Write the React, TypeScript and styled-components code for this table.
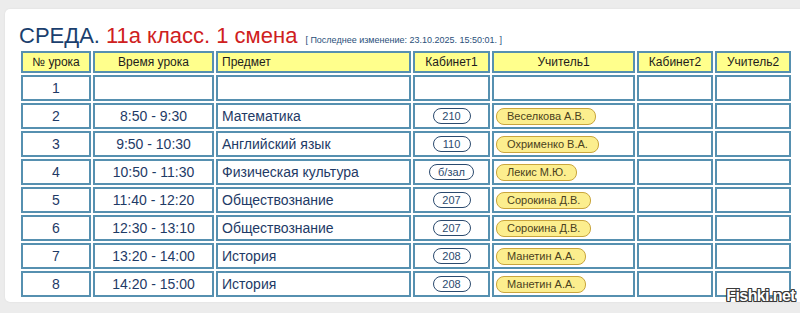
import React from "react";
import styled, { createGlobalStyle } from "styled-components";

const Global = createGlobalStyle`
  html, body { margin: 0; padding: 0; }
  body {
    background: #ececec;
    font-family: "Liberation Sans", Arial, sans-serif;
    overflow: hidden;
    width: 800px;
    height: 313px;
  }
`;

const Page = styled.div`
  position: relative;
  width: 800px;
  height: 313px;
  overflow: hidden;
`;

const Card = styled.div`
  margin: 9px 0 0 5px;
  width: 830px;
  height: 293px;
  box-sizing: border-box;
  background: #ffffff;
  border-radius: 5px;
  box-shadow: 0 0 2px rgba(0, 0, 0, 0.08);
  padding: 14px 0 0 14px;
`;

const Title = styled.div`
  display: flex;
  align-items: baseline;
  height: 26px;
  line-height: 26px;
`;

const Day = styled.span`
  font-size: 22px;
  color: #1b3f6e;
`;

const ClassName = styled.span`
  font-size: 22px;
  color: #cf2020;
  margin-left: 6px;
`;

const Updated = styled.span`
  font-size: 9px;
  color: #2a4f7a;
  margin-left: 8px;
`;

const Grid = styled.div`
  display: grid;
  grid-template-columns: 70px 121px 195px 77px 143px 76px 76px;
  grid-auto-rows: 26px;
  grid-template-rows: 22px;
  gap: 2px;
  padding: 2px;
`;

const Cell = styled.div<{ $head?: boolean; $align?: "left" | "center" }>`
  box-sizing: border-box;
  border: 2px solid #5690b0;
  background: ${(p) => (p.$head ? "#ffff8c" : "#ffffff")};
  color: ${(p) => (p.$head ? "#1c1c1c" : "#1e3a66")};
  font-size: ${(p) => (p.$head ? "12px" : "14px")};
  display: flex;
  align-items: center;
  justify-content: ${(p) => (p.$align === "left" ? "flex-start" : "center")};
  padding: ${(p) => (p.$align === "left" ? "0 0 0 4px" : "0")};
  white-space: nowrap;
  overflow: hidden;
`;

const TeacherCell = styled(Cell)`
  justify-content: flex-start;
  padding-left: 2px;
`;

const RoomPill = styled.span`
  display: inline-flex;
  align-items: center;
  justify-content: center;
  box-sizing: border-box;
  height: 16px;
  min-width: 38px;
  padding: 0 8px;
  border: 1px solid #2b4a6e;
  border-radius: 8px;
  background: #ffffff;
  color: #2b4a6e;
  font-size: 11px;
`;

const TeacherPill = styled.span`
  display: inline-flex;
  align-items: center;
  box-sizing: border-box;
  height: 17px;
  padding: 0 10px;
  border: 1px solid #c9a53c;
  border-radius: 8px;
  background: #fcee8e;
  color: #4a3f1c;
  font-size: 11px;
`;

const Watermark = styled.div`
  position: absolute;
  right: 5px;
  bottom: 8px;
  font-family: "Liberation Sans", sans-serif;
  font-weight: bold;
  font-size: 16px;
  letter-spacing: -0.6px;
  color: #ffffff;
  text-shadow: -1px -1px 0 #3a3a3a, 1px -1px 0 #3a3a3a, -1px 1px 0 #3a3a3a,
    1px 1px 0 #3a3a3a, 0 1px 0 #3a3a3a, 0 -1px 0 #3a3a3a, 1px 0 0 #3a3a3a,
    -1px 0 0 #3a3a3a;
`;

type Lesson = {
  n: number;
  time: string;
  subject: string;
  room: string;
  teacher: string;
};

const lessons: Lesson[] = [
  { n: 1, time: "", subject: "", room: "", teacher: "" },
  { n: 2, time: "8:50 - 9:30", subject: "Математика", room: "210", teacher: "Веселкова А.В." },
  { n: 3, time: "9:50 - 10:30", subject: "Английский язык", room: "110", teacher: "Охрименко В.А." },
  { n: 4, time: "10:50 - 11:30", subject: "Физическая культура", room: "б/зал", teacher: "Лекис М.Ю." },
  { n: 5, time: "11:40 - 12:20", subject: "Обществознание", room: "207", teacher: "Сорокина Д.В." },
  { n: 6, time: "12:30 - 13:10", subject: "Обществознание", room: "207", teacher: "Сорокина Д.В." },
  { n: 7, time: "13:20 - 14:00", subject: "История", room: "208", teacher: "Манетин А.А." },
  { n: 8, time: "14:20 - 15:00", subject: "История", room: "208", teacher: "Манетин А.А." },
];

const headers = ["№ урока", "Время урока", "Предмет", "Кабинет1", "Учитель1", "Кабинет2", "Учитель2"];

export default function App() {
  return (
    <>
      <Global />
      <Page>
        <Card>
          <Title>
            <Day>СРЕДА.</Day>
            <ClassName>11а класс. 1 смена</ClassName>
            <Updated>[ Последнее изменение: 23.10.2025. 15:50:01. ]</Updated>
          </Title>
          <Grid>
            {headers.map((h) => (
              <Cell key={h} $head $align={h === "Предмет" ? "left" : "center"}>
                {h}
              </Cell>
            ))}
            {lessons.map((l) => (
              <React.Fragment key={l.n}>
                <Cell>{l.n}</Cell>
                <Cell>{l.time}</Cell>
                <Cell $align="left">{l.subject}</Cell>
                <Cell>{l.room && <RoomPill>{l.room}</RoomPill>}</Cell>
                <TeacherCell>{l.teacher && <TeacherPill>{l.teacher}</TeacherPill>}</TeacherCell>
                <Cell />
                <Cell />
              </React.Fragment>
            ))}
          </Grid>
        </Card>
        <Watermark>Fishki.net</Watermark>
      </Page>
    </>
  );
}
